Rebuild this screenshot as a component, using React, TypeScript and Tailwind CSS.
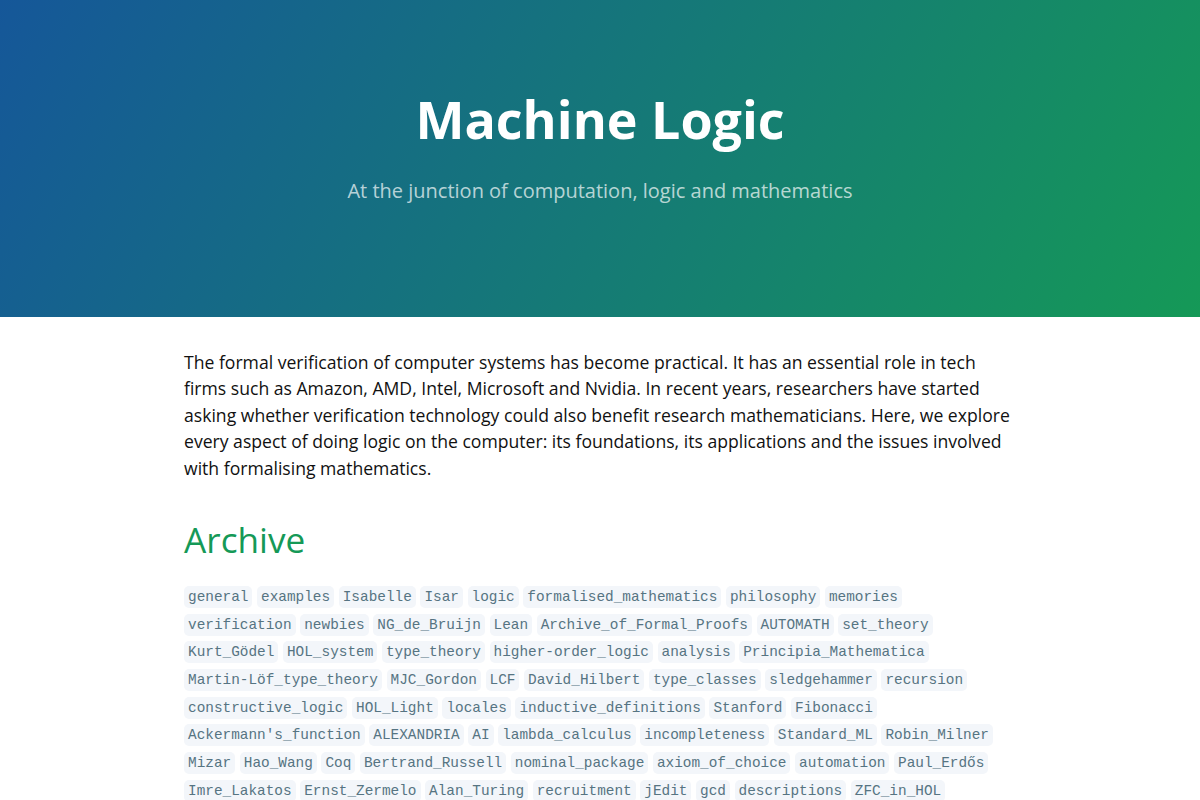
const tags = [
  'general', 'examples', 'Isabelle', 'Isar', 'logic', 'formalised_mathematics', 'philosophy', 'memories',
  'verification', 'newbies', 'NG_de_Bruijn', 'Lean', 'Archive_of_Formal_Proofs', 'AUTOMATH', 'set_theory',
  'Kurt_Gödel', 'HOL_system', 'type_theory', 'higher-order_logic', 'analysis', 'Principia_Mathematica',
  'Martin-Löf_type_theory', 'MJC_Gordon', 'LCF', 'David_Hilbert', 'type_classes', 'sledgehammer', 'recursion',
  'constructive_logic', 'HOL_Light', 'locales', 'inductive_definitions', 'Stanford', 'Fibonacci',
  "Ackermann's_function", 'ALEXANDRIA', 'AI', 'lambda_calculus', 'incompleteness', 'Standard_ML', 'Robin_Milner',
  'Mizar', 'Hao_Wang', 'Coq', 'Bertrand_Russell', 'nominal_package', 'axiom_of_choice', 'automation', 'Paul_Erdős',
  'Imre_Lakatos', 'Ernst_Zermelo', 'Alan_Turing', 'recruitment', 'jEdit', 'gcd', 'descriptions', 'ZFC_in_HOL',
]

export default function App() {
  return (
    <div className="min-h-screen bg-white font-['Open_Sans',sans-serif] text-[#111]">
      <header className="bg-[linear-gradient(120deg,#155799,#159957)] pt-[80px] pb-[111px] text-center text-white">
        <h1 className="text-[52px] font-bold leading-[1.5]">Machine Logic</h1>
        <h2 className="mt-[18px] text-[20px] leading-[30px] font-normal text-white/70">
          At the junction of computation, logic and mathematics
        </h2>
      </header>

      <main className="mx-auto max-w-[1024px] px-[96px] pt-8 pb-8 text-[17.6px] leading-[1.5]">
        <p>
          The formal verification of computer systems has become practical. It has an essential role in tech
          firms such as Amazon, AMD, Intel, Microsoft and Nvidia. In recent years, researchers have started
          asking whether verification technology could also benefit research mathematicians. Here, we explore
          every aspect of doing logic on the computer: its foundations, its applications and the issues involved
          with formalising mathematics.
        </p>

        <h1 className="mt-[36px] text-[35.2px] font-normal leading-[1.25] text-[#159957]">Archive</h1>

        {/* tag cloud */}
        <div className="mt-[25px] flex flex-wrap gap-x-[4.6px] gap-y-[5.7px]">
          {tags.map((t) => (
            <code
              key={t}
              className="h-[22px] whitespace-nowrap rounded-[5px] bg-[#f3f6fa] px-1 font-['Liberation_Mono',monospace] text-[14.4px] leading-[22px] text-[#567482]"
            >
              {t}
            </code>
          ))}
        </div>
      </main>
    </div>
  )
}
